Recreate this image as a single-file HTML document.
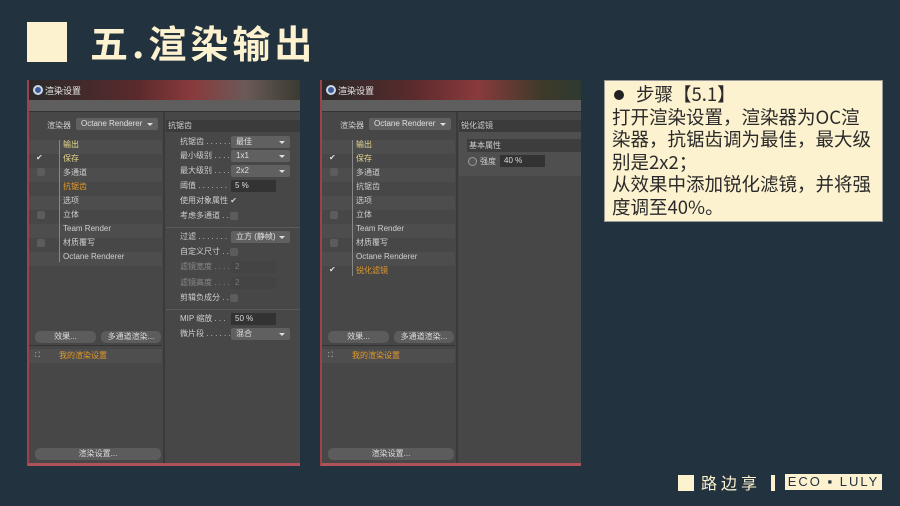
<!DOCTYPE html>
<html><head><meta charset="utf-8"><style>
*{margin:0;padding:0;box-sizing:border-box}
body{width:900px;height:506px;background:#22323e;position:relative;overflow:hidden;font-family:"Liberation Sans","Noto Sans CJK SC",sans-serif}
.a{position:absolute}
.win{position:absolute;background:#474747;overflow:hidden;border-left:2px solid #b8b8b8;border-bottom:3px solid #b0525a}
.tb{position:absolute;left:0;top:0;right:0;height:20px;background:linear-gradient(90deg,#2a2a2a 0%,#5b2a2c 40%,#8a3a3c 60%,#6a5a58 80%,#3a3a30 100%)}
.tt{position:absolute;left:16px;top:4px;font-size:9px;color:#e8e8e8}
.logo{position:absolute;left:4px;top:5px;width:10px;height:10px;border-radius:50%;background:#3a5a9a;border:2px solid #cfd6e6}
.tool{position:absolute;left:0;right:0;top:20px;height:12px;background:#5e5e5e;border-bottom:1px solid #333}
.t{position:absolute;font-size:8px;color:#cfcfcf;white-space:nowrap;line-height:10px}
.y{color:#e9d98a}.o{color:#e39a2c}.d{color:#8a8a8a}
.dd{position:absolute;height:12px;background:#606060;border-radius:2px;font-size:8px;color:#e0e0e0;padding-left:5px;line-height:12px}
.dd:after{content:"";position:absolute;right:5px;top:5px;border:3px solid transparent;border-top:3px solid #ddd}
.num{position:absolute;height:12px;background:#333;font-size:8px;color:#ddd;padding-left:4px;line-height:12px}
.cb{position:absolute;width:8px;height:8px;background:#5c5c5c;border-radius:2px}
.btn{position:absolute;height:12px;background:#5c5c5c;border-radius:5px;font-size:8px;color:#ddd;text-align:center;line-height:12px}
.row{position:absolute;left:0;width:133px;height:14px}
.ln{position:absolute;left:30px;width:1px;background:#888}
.tx div{white-space:nowrap}
</style></head><body>
<div class="a" style="left:27px;top:22px;width:40px;height:40px;background:#fdf2d0"></div>
<div class="a" style="left:90px;top:17px;font-size:38px;font-weight:bold;color:#fdf2d0;letter-spacing:4px;font-family:'Noto Sans CJK SC',sans-serif;line-height:50px">五.渲染输出</div>

<!-- window 1 -->
<div class="win" style="left:27px;top:80px;width:273px;height:386px;border-left-color:#a04048">
<div class="tb"></div><div class="logo"></div><div class="tt">渲染设置</div>
<div class="tool"></div>
<div class="a" style="left:134px;top:32px;width:2px;bottom:0;background:#3a3a3a"></div>
<div class="t" style="left:18px;top:41px">渲染器</div>
<div class="dd" style="left:47px;top:38px;width:82px">Octane Renderer</div>
<div class="row" style="top:60px;background:#4d4d4d"></div><div class="row" style="top:88px;background:#4d4d4d"></div><div class="row" style="top:116px;background:#4d4d4d"></div><div class="row" style="top:144px;background:#4d4d4d"></div><div class="row" style="top:172px;background:#4d4d4d"></div>
<div class="ln" style="top:60px;height:122px"></div>
<div class="t y" style="left:34px;top:60px">输出</div>
<div class="t y" style="left:34px;top:74px">保存</div><div class="t" style="left:7px;top:73px;color:#ddd">✔</div>
<div class="t" style="left:34px;top:88px">多通道</div><div class="cb" style="left:8px;top:88px"></div>
<div class="t o" style="left:34px;top:102px">抗锯齿</div>
<div class="t" style="left:34px;top:116px">选项</div>
<div class="t" style="left:34px;top:130px">立体</div><div class="cb" style="left:8px;top:131px"></div>
<div class="t" style="left:34px;top:144px">Team Render</div>
<div class="t" style="left:34px;top:158px">材质覆写</div><div class="cb" style="left:8px;top:159px"></div>
<div class="t" style="left:34px;top:172px">Octane Renderer</div>
<div class="btn" style="left:6px;top:251px;width:61px">效果...</div>
<div class="btn" style="left:72px;top:251px;width:60px">多通道渲染...</div>
<div class="a" style="left:0;top:265px;width:133px;height:1px;background:#333"></div>
<div class="row" style="top:269px;background:#4e4e4e"></div>
<div class="t o" style="left:30px;top:271px">我的渲染设置</div><div class="t" style="left:6px;top:271px;font-size:7px">⛶</div>
<div class="btn" style="left:6px;top:368px;width:126px">渲染设置...</div>
<div class="a" style="left:137px;top:40px;right:0;height:12px;background:#3b3b3b"></div>
<div class="t" style="left:139px;top:41px">抗锯齿</div>
<div class="t" style="left:151px;top:57px">抗锯齿 . . . . . .</div><div class="dd" style="left:202px;top:56px;width:59px">最佳</div>
<div class="t" style="left:151px;top:71px">最小级别 . . . .</div><div class="dd" style="left:202px;top:70px;width:59px">1x1</div>
<div class="t" style="left:151px;top:86px">最大级别 . . . .</div><div class="dd" style="left:202px;top:85px;width:59px">2x2</div>
<div class="t" style="left:151px;top:101px">阈值 . . . . . . .</div><div class="num" style="left:202px;top:100px;width:45px">5 %</div>
<div class="t" style="left:151px;top:116px">使用对象属性 ✔</div>
<div class="t" style="left:151px;top:131px">考虑多通道 . .</div><div class="cb" style="left:201px;top:132px"></div>
<div class="a" style="left:137px;top:147px;right:0;height:1px;background:#5a5a5a"></div>
<div class="t" style="left:151px;top:152px">过滤 . . . . . . .</div><div class="dd" style="left:202px;top:151px;width:59px">立方 (静帧)</div>
<div class="t" style="left:151px;top:167px">自定义尺寸 . .</div><div class="cb" style="left:201px;top:168px"></div>
<div class="t d" style="left:151px;top:182px">滤镜宽度 . . . .</div><div class="num" style="left:202px;top:181px;width:45px;background:#444;color:#777">2</div>
<div class="t d" style="left:151px;top:198px">滤镜高度 . . . .</div><div class="num" style="left:202px;top:197px;width:45px;background:#444;color:#777">2</div>
<div class="t" style="left:151px;top:213px">剪辑负成分 . .</div><div class="cb" style="left:201px;top:214px"></div>
<div class="a" style="left:137px;top:229px;right:0;height:1px;background:#5a5a5a"></div>
<div class="t" style="left:151px;top:234px">MIP 缩放 . . .</div><div class="num" style="left:202px;top:233px;width:45px">50 %</div>
<div class="t" style="left:151px;top:249px">微片段 . . . . . .</div><div class="dd" style="left:202px;top:248px;width:59px">混合</div>
</div>

<!-- window 2 -->
<div class="win" style="left:320px;top:80px;width:261px;height:386px;border-left-color:#a04048">
<div class="tb" style="background:linear-gradient(90deg,#2a2a2a 0%,#5b2a2c 35%,#8a3a3c 60%,#3e3a2a 85%,#2e3a30 100%)"></div><div class="logo"></div><div class="tt">渲染设置</div>
<div class="tool"></div>
<div class="a" style="left:134px;top:32px;width:2px;bottom:0;background:#3a3a3a"></div>
<div class="t" style="left:18px;top:41px">渲染器</div>
<div class="dd" style="left:47px;top:38px;width:82px">Octane Renderer</div>
<div class="row" style="top:60px;background:#4d4d4d"></div><div class="row" style="top:88px;background:#4d4d4d"></div><div class="row" style="top:116px;background:#4d4d4d"></div><div class="row" style="top:144px;background:#4d4d4d"></div><div class="row" style="top:172px;background:#4d4d4d"></div>
<div class="ln" style="top:60px;height:136px"></div>
<div class="t y" style="left:34px;top:60px">输出</div>
<div class="t y" style="left:34px;top:74px">保存</div><div class="t" style="left:7px;top:73px;color:#ddd">✔</div>
<div class="t" style="left:34px;top:88px">多通道</div><div class="cb" style="left:8px;top:88px"></div>
<div class="t" style="left:34px;top:102px">抗锯齿</div>
<div class="t" style="left:34px;top:116px">选项</div>
<div class="t" style="left:34px;top:130px">立体</div><div class="cb" style="left:8px;top:131px"></div>
<div class="t" style="left:34px;top:144px">Team Render</div>
<div class="t" style="left:34px;top:158px">材质覆写</div><div class="cb" style="left:8px;top:159px"></div>
<div class="t" style="left:34px;top:172px">Octane Renderer</div>
<div class="t o" style="left:34px;top:186px">锐化滤镜</div><div class="t" style="left:7px;top:185px;color:#ddd">✔</div>
<div class="btn" style="left:6px;top:251px;width:61px">效果...</div>
<div class="btn" style="left:72px;top:251px;width:60px">多通道渲染...</div>
<div class="a" style="left:0;top:265px;width:133px;height:1px;background:#333"></div>
<div class="row" style="top:269px;background:#4e4e4e"></div>
<div class="t o" style="left:30px;top:271px">我的渲染设置</div><div class="t" style="left:6px;top:271px;font-size:7px">⛶</div>
<div class="btn" style="left:6px;top:368px;width:126px">渲染设置...</div>
<div class="a" style="left:137px;top:40px;right:0;height:12px;background:#3b3b3b"></div>
<div class="t" style="left:139px;top:41px">锐化滤镜</div>
<div class="a" style="left:137px;top:52px;right:0;height:44px;background:#4f4f4f"></div>
<div class="a" style="left:145px;top:59px;right:0;height:13px;background:#3d3d3d"></div>
<div class="t" style="left:147px;top:61px">基本属性</div>
<div class="a" style="left:146px;top:77px;width:9px;height:9px;border-radius:50%;border:1px solid #999;background:#555"></div>
<div class="t" style="left:158px;top:77px">强度</div><div class="num" style="left:178px;top:75px;width:45px">40 %</div>
</div>

<!-- text box -->
<div class="a" style="left:604px;top:80px;width:279px;height:142px;background:#fdf2d0;border:1px solid #999"></div>
<div class="a tx" style="left:612px;top:83px;width:272px;font-size:18.5px;line-height:22.5px;color:#2a2a2a;font-family:'Noto Sans CJK SC',sans-serif">
<div><span style="display:inline-block;width:10px;height:10px;border-radius:50%;background:#222;margin:0 12px 2px 2px;vertical-align:middle"></span>步骤【5.1】</div>
<div>打开渲染设置，渲染器为OC渲</div>
<div>染器，抗锯齿调为最佳，最大级</div>
<div>别是2x2；</div>
<div>从效果中添加锐化滤镜，并将强</div>
<div>度调至40%。</div>
</div>

<!-- footer -->
<div class="a" style="left:678px;top:475px;width:16px;height:16px;background:#fdf2d0"></div>
<div class="a" style="left:701px;top:471px;font-size:16px;color:#fdf2d0;letter-spacing:4px;font-family:'Noto Sans CJK SC',sans-serif;line-height:22px">路边享</div>
<div class="a" style="left:771px;top:475px;width:4px;height:16px;background:#fdf2d0"></div>
<div class="a" style="left:785px;top:474px;width:97px;height:16px;background:#fdf2d0;color:#22323e;font-size:13px;line-height:16px;text-align:center;letter-spacing:2px">ECO ▪ LULY</div>
</body></html>
